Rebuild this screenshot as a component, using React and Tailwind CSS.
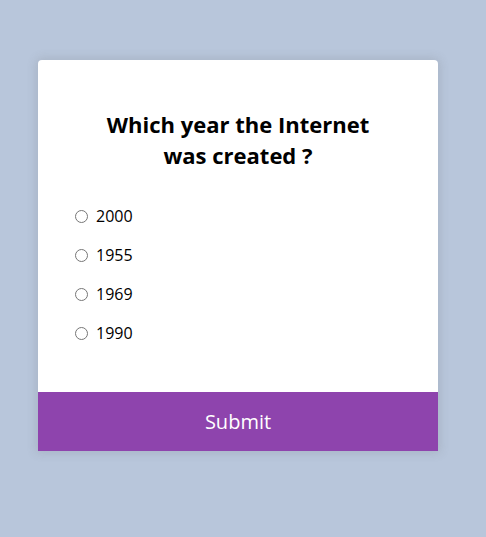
export default function App() {
  const options = ["2000", "1955", "1969", "1990"];
  return (
    <div
      className="min-h-[537px] w-full bg-[#b8c6db] pt-[60px] pl-[38px]"
      style={{ fontFamily: '"Open Sans", "Noto Sans", sans-serif' }}
    >
      <div className="w-[400px] bg-white rounded-t-[4px] overflow-hidden shadow-[0_0_10px_2px_rgba(100,100,100,0.18)]">
        <div className="px-[32px] pt-[49px] pb-[47px]">
          <h2 className="mx-auto w-[290px] text-center text-[22px] leading-[31px] font-bold text-black">
            Which year the Internet was created ?
          </h2>
          <ul className="mt-[33px] flex flex-col gap-[15px]">
            {options.map((o, i) => (
              <li key={o} className="flex items-center h-[24px]">
                <input
                  type="radio"
                  name="answer"
                  id={"a" + i}
                  className="ml-[5px] mr-[8px] w-[13px] h-[13px] m-0"
                />
                <label htmlFor={"a" + i} className="text-[16px] text-black leading-[24px]">
                  {o}
                </label>
              </li>
            ))}
          </ul>
        </div>
        <button className="block w-full h-[59px] bg-[#8e44ad] text-white text-[20px] border-0">
          Submit
        </button>
      </div>
    </div>
  );
}
